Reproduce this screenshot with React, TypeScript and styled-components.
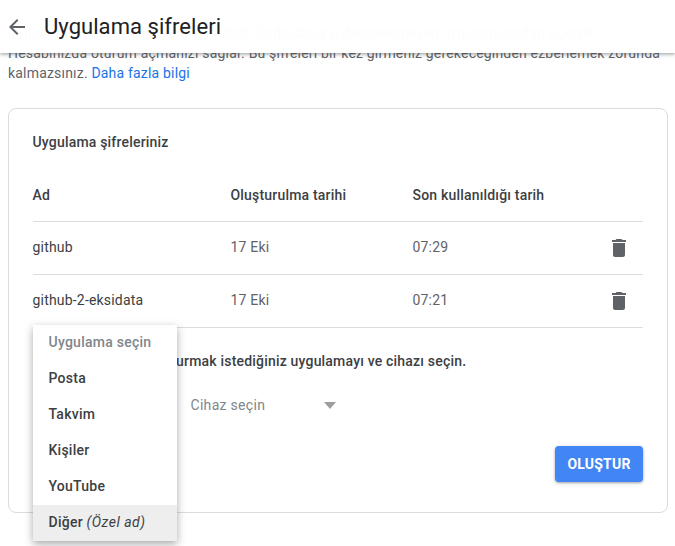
import React from 'react'
import styled, { createGlobalStyle } from 'styled-components'

const GlobalStyle = createGlobalStyle`
  html, body {
    margin: 0;
    background: #fff;
    overflow: hidden;
  }
  body {
    font-family: Roboto, "Liberation Sans", sans-serif;
    font-size: 14px;
    color: #3c4043;
  }
`

const passwords = [
  { name: 'github', created: '17 Eki', lastUsed: '07:29' },
  { name: 'github-2-eksidata', created: '17 Eki', lastUsed: '07:21' }
]

const menuItems = ['Posta', 'Takvim', 'Kişiler', 'YouTube']

const TrashIcon: React.FC = () => (
  <svg width="24" height="24" viewBox="0 0 24 24" fill="#5f6368">
    <path d="M6 19c0 1.1.9 2 2 2h8c1.100 0 2-.9 2-2V7H6v12zM19 4h-3.500l-1-1h-5l-1 1H5v2h14V4z" />
  </svg>
)

const App: React.FC = () => (
  <Page>
    <GlobalStyle />
    <Header>
      <BackButton>
        <svg width="24" height="24" viewBox="0 0 24 24" fill="#5f6368">
          <path d="M20 11H7.830l5.590-5.590L12 4l-8 8 8 8 1.410-1.410L7.830 13H20v-2z" />
        </svg>
      </BackButton>
      <Title>Uygulama şifreleri</Title>
    </Header>

    <Intro>
      Uygulama şifreleri, cihazlarda 2 Adımlı Doğrulama'yı desteklemeyen uygulamalardan Google
      Hesabınızda oturum açmanızı sağlar. Bu şifreleri bir kez girmeniz gerekeceğinden ezberlemek
      zorunda kalmazsınız. <MoreLink href="#">Daha fazla bilgi</MoreLink>
    </Intro>

    <Card>
      <CardTitle>Uygulama şifreleriniz</CardTitle>
      <HeadRow>
        <span>Ad</span>
        <span>Oluşturulma tarihi</span>
        <span>Son kullanıldığı tarih</span>
      </HeadRow>
      {passwords.map((p) => (
        <Row key={p.name}>
          <Name>{p.name}</Name>
          <Muted>{p.created}</Muted>
          <Muted>{p.lastUsed}</Muted>
          <DeleteButton>
            <TrashIcon />
          </DeleteButton>
        </Row>
      ))}

      <Hint>Uygulama şifresi oluşturmak istediğiniz uygulamayı ve cihazı seçin.</Hint>
      <Selects>
        <Select>
          <span>Cihaz seçin</span>
          <Arrow />
        </Select>
      </Selects>
      <Actions>
        <CreateButton>OLUŞTUR</CreateButton>
      </Actions>

      <Menu>
        <MenuItem $placeholder>Uygulama seçin</MenuItem>
        {menuItems.map((item) => (
          <MenuItem key={item}>{item}</MenuItem>
        ))}
        <MenuItem $active>
          Diğer&nbsp;<em>(Özel ad)</em>
        </MenuItem>
      </Menu>
    </Card>
  </Page>
)

export default App

const Page = styled.div`
  position: relative;
  width: 675px;
  height: 546px;
  overflow: hidden;
  padding: 23px 7px 0 8px;
  box-sizing: border-box;
  letter-spacing: 0.19px;
`

const Header = styled.header`
  position: absolute;
  top: 0;
  left: 0;
  right: 0;
  height: 53px;
  display: flex;
  align-items: center;
  background: rgba(255, 255, 255, 0.98);
  box-shadow: 0 1px 4px rgba(60, 64, 67, 0.55);
  z-index: 2;
`

const BackButton = styled.div`
  display: flex;
  width: 24px;
  height: 24px;
  margin-left: 5px;
  margin-right: 15px;
`

const Title = styled.h1`
  margin: 0;
  font-size: 22px;
  font-weight: 400;
  letter-spacing: 0.05px;
  color: #202124;
`

const Intro = styled.p`
  margin: 0;
  line-height: 20px;
  color: #5f6368;
`

const MoreLink = styled.a`
  color: #1a73e8;
  text-decoration: none;
`

const Card = styled.section`
  position: relative;
  box-sizing: border-box;
  height: 405px;
  margin-top: 25px;
  padding: 23px 24px 0 23.5px;
  border: 1px solid #dadce0;
  border-radius: 8px;
`

const CardTitle = styled.div`
  font-weight: 500;
  line-height: 20px;
  color: #3c4043;
`

const columns = `
  display: grid;
  grid-template-columns: 198px 182px 1fr 50px;
  align-items: center;
`

const HeadRow = styled.div`
  ${columns}
  box-sizing: content-box;
  height: 52px;
  margin-top: 17px;
  font-weight: 500;
  color: #3c4043;
  border-bottom: 1px solid #dadce0;

  span {
    padding-bottom: 1px;
  }
`

const Row = styled.div`
  ${columns}
  height: 52px;
  border-bottom: 1px solid #dadce0;
`

const Name = styled.span`
  padding-bottom: 2px;
  color: #3c4043;
`

const Muted = styled.span`
  padding-bottom: 2px;
  color: #5f6368;
`

const DeleteButton = styled.div`
  display: flex;
  justify-content: center;
  margin-left: 1px;
`

const Hint = styled.div`
  margin-top: 23px;
  line-height: 20px;
  font-weight: 500;
  color: #3c4043;
`

const Selects = styled.div`
  display: flex;
  padding-left: 158px;
  margin-top: 24px;
`

const Select = styled.div`
  display: flex;
  align-items: center;
  justify-content: space-between;
  width: 145px;
  height: 20px;
  letter-spacing: 0.3px;
  color: #80868b;
`

const Arrow = styled.i`
  width: 0;
  height: 0;
  border-left: 6.5px solid transparent;
  border-right: 6.5px solid transparent;
  border-top: 7px solid #9e9e9e;
`

const Actions = styled.div`
  display: flex;
  justify-content: flex-end;
  margin-top: 31px;
`

const CreateButton = styled.button`
  width: 88px;
  height: 36px;
  padding: 0;
  border: 0;
  border-radius: 4px;
  background: #4285f4;
  color: #fff;
  font-family: inherit;
  font-size: 14px;
  font-weight: 700;
  letter-spacing: 0.2px;
  box-shadow: 0 1px 3px rgba(60, 64, 67, 0.5);
`

const Menu = styled.div`
  position: absolute;
  left: 24px;
  top: 216px;
  width: 144px;
  background: #fff;
  box-shadow: 0 3px 8px rgba(60, 64, 67, 0.45);
  z-index: 1;
`

const MenuItem = styled.div<{ $placeholder?: boolean; $active?: boolean }>`
  display: flex;
  align-items: center;
  box-sizing: border-box;
  height: 36px;
  padding: 0 0 2px 15.5px;
  font-weight: 500;
  letter-spacing: 0.25px;
  color: ${(p) => (p.$placeholder ? '#80868b' : '#3c4043')};
  background: ${(p) => (p.$active ? '#eeeeee' : 'transparent')};

  em {
    font-weight: 400;
    letter-spacing: 0.5px;
    color: #3c4043;
  }
`
